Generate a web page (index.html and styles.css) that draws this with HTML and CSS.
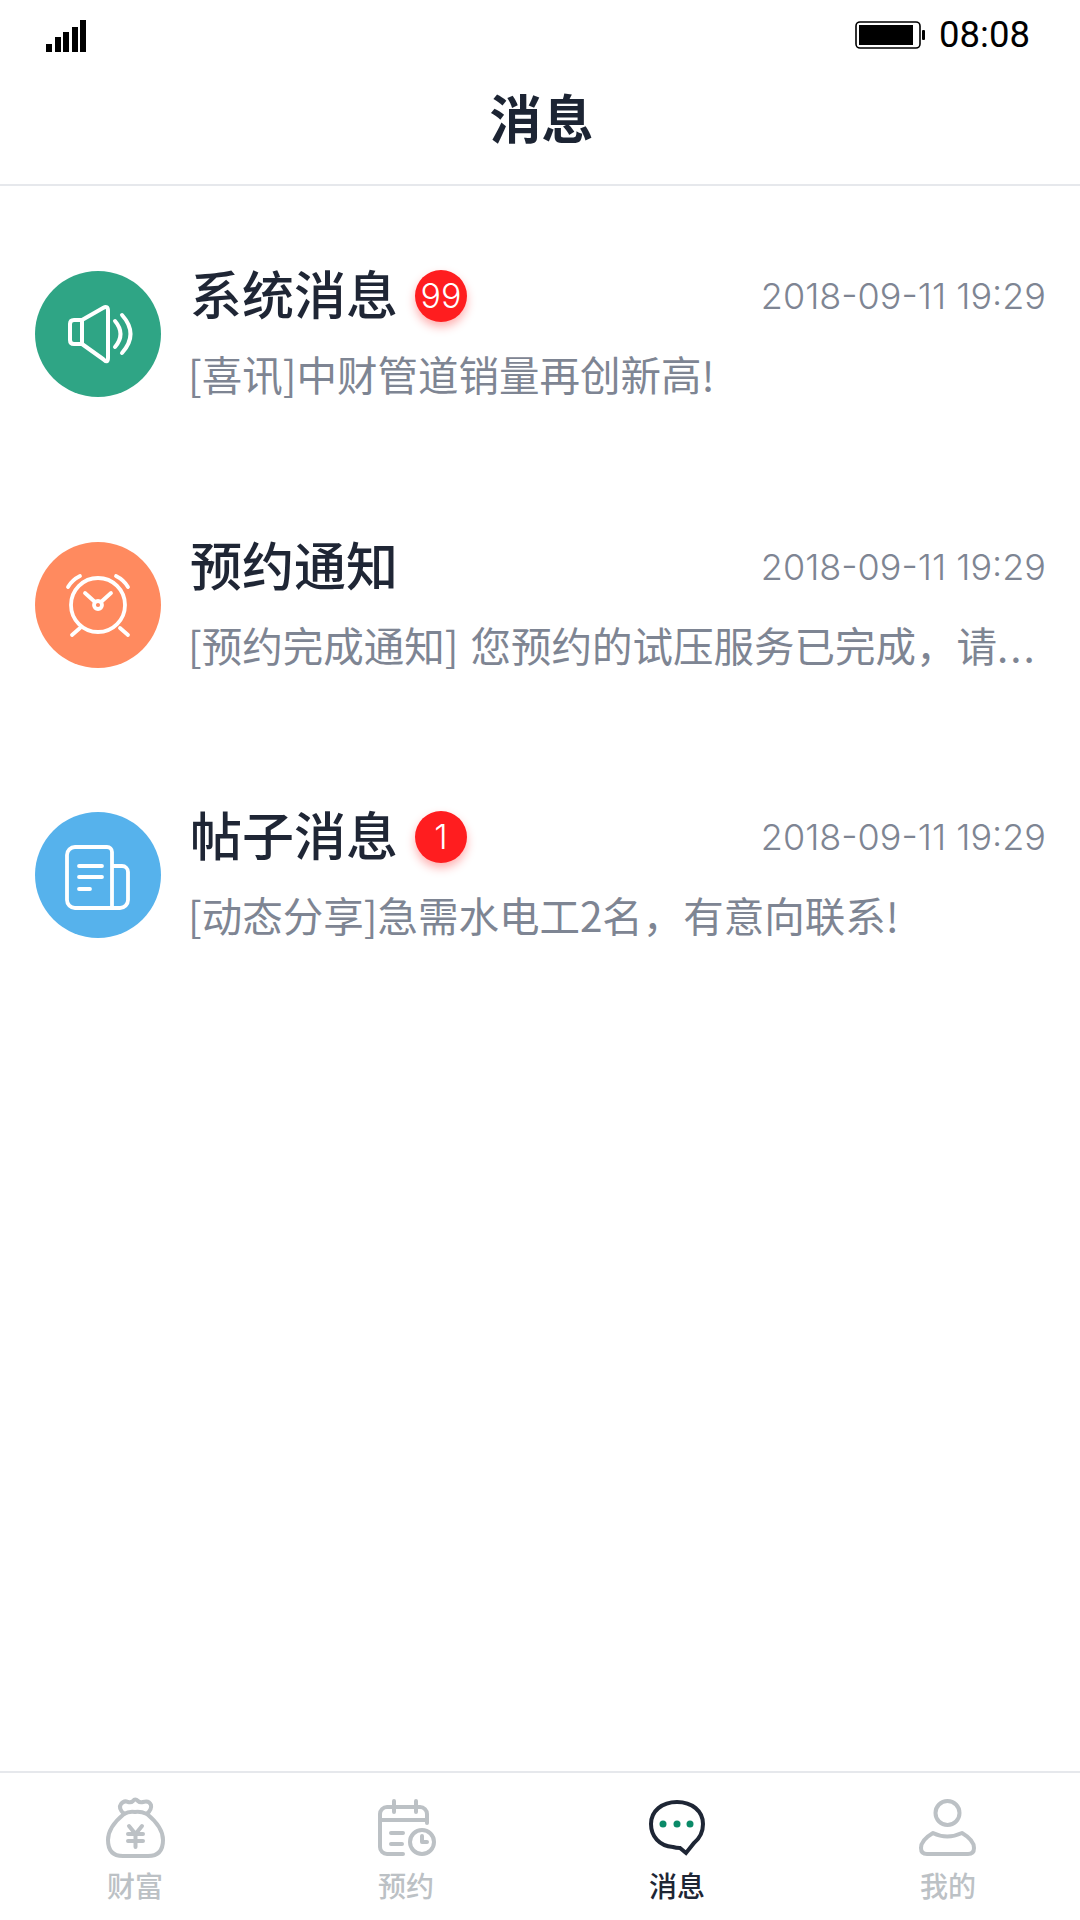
FILE: index.html
```html
<!DOCTYPE html>
<html lang="zh-CN">
<head>
<meta charset="utf-8">
<title>消息</title>
<link rel="stylesheet" href="styles.css">
</head>
<body>
<div class="phone">
  <div class="status">
    <svg class="signal" width="40" height="32" viewBox="0 0 40 32"><rect x="0" y="24" width="6" height="8"/><rect x="9" y="17" width="6" height="15"/><rect x="17" y="12" width="6" height="20"/><rect x="26" y="7" width="6" height="25"/><rect x="34" y="0" width="6" height="32"/></svg>
    <div class="status-right">
      <svg class="battery" width="71" height="28" viewBox="0 0 71 28"><rect x="1" y="1" width="64" height="26" rx="4" fill="none" stroke="#000" stroke-width="1.6"/><rect x="4" y="4" width="54" height="20" fill="#000"/><rect x="67" y="9" width="3" height="10" rx="1" fill="#000"/></svg>
      <span class="time">08:08</span>
    </div>
  </div>
  <header class="nav">消息</header>
  <main class="list">
    <section class="row">
      <div class="avatar green">
        <svg width="126" height="126" viewBox="0 0 126 126" fill="none" stroke="#fff" stroke-width="4" stroke-linecap="round" stroke-linejoin="round"><path d="M47 49 L68 37 Q73 34 73 40 V87 Q73 93 68 88 L47 73 H39 Q35 73 35 69 V53 Q35 49 39 49 Z M47 49 V73"/><path d="M80 50 Q91 63 80 76"/><path d="M87 44 Q104 63 87 82"/></svg>
      </div>
      <div class="body">
        <div class="top">
          <div class="name"><h2>系统消息</h2><span class="badge">99</span></div>
          <time class="date">2018-09-11 19:29</time>
        </div>
        <p class="desc">[喜讯]中财管道销量再创新高!</p>
      </div>
    </section>
    <section class="row">
      <div class="avatar orange">
        <svg width="126" height="126" viewBox="0 0 126 126" fill="none" stroke="#fff" stroke-width="3.800" stroke-linecap="round" stroke-linejoin="round"><circle cx="63" cy="63" r="27"/><circle cx="63" cy="63" r="4"/><path d="M50 51 L60 60 M76 51 L66 60"/><path d="M33 45 Q37 38 45 34 M81 34 Q89 38 93 45"/><path d="M37 93 L45 86 M93 93 L85 86"/></svg>
      </div>
      <div class="body">
        <div class="top">
          <div class="name"><h2>预约通知</h2></div>
          <time class="date">2018-09-11 19:29</time>
        </div>
        <p class="desc spaced">[预约完成通知] 您预约的试压服务已完成&#65292;请<span class="dots">...</span></p>
      </div>
    </section>
    <section class="row">
      <div class="avatar blue">
        <svg width="126" height="126" viewBox="0 0 126 126" fill="none" stroke="#fff" stroke-width="3.800" stroke-linecap="round" stroke-linejoin="round"><path d="M77 96 H40 a8 8 0 0 1 -8 -8 V43 a8 8 0 0 1 8 -8 H72 a5 5 0 0 1 5 5 V96 H85 a8 8 0 0 0 8 -8 V60 a6 6 0 0 0 -6 -6 H77"/><path d="M44 54 H67 M44 65 H67 M44 77 H55"/></svg>
      </div>
      <div class="body">
        <div class="top">
          <div class="name"><h2>帖子消息</h2><span class="badge">1</span></div>
          <time class="date">2018-09-11 19:29</time>
        </div>
        <p class="desc">[动态分享]急需水电工2名&#65292;有意向联系!</p>
      </div>
    </section>
  </main>
  <nav class="tabs">
    <div class="tab">
      <svg width="70" height="66" viewBox="0 0 70 66" fill="none" stroke="#bcc1c5" stroke-width="4" stroke-linecap="round" stroke-linejoin="round"><path d="M24 19 Q18 13 21 9 Q24 5 28 7 Q31 8 33 6 Q35 3 38 6 Q40 8 43 7 Q49 5 51 10 Q52 14 47 19 Q40 16 35 17 Q29 16 24 19 Z"/><path d="M24 19 Q8 32 8 45 Q8 61 23 61 H48 Q63 61 63 45 Q63 32 47 19"/><path d="M29 31 L35.500 39 L42 31 M35.500 39 V52 M28 39 H43 M28 46 H43"/></svg>
      <span>财富</span>
    </div>
    <div class="tab">
      <svg width="70" height="66" viewBox="0 0 70 66" fill="none" stroke="#bcc1c5" stroke-width="4" stroke-linecap="round" stroke-linejoin="round"><path d="M32 59 H16 a7 7 0 0 1 -7 -7 V19 a7 7 0 0 1 7 -7 H49 a7 7 0 0 1 7 7 V28"/><path d="M9 25 H56 M23 6 V17 M45 6 V17 M20 38 H32 M20 49 H31"/><circle cx="51" cy="47" r="12"/><path d="M51 41 V47 H56"/></svg>
      <span>预约</span>
    </div>
    <div class="tab active">
      <svg width="70" height="66" viewBox="0 0 70 66" fill="none" stroke="#1e2635" stroke-width="4" stroke-linejoin="miter"><path d="M38 53 Q34 53 31 52 C17 51 9 41 9 29 C9 16 20 7 35 7 C50 7 61 16 61 29 C61 37 58 43 52 48 L44 58 Z"/><circle cx="21" cy="29" r="3.500" fill="#0a8a68" stroke="none"/><circle cx="35" cy="29" r="3.500" fill="#0a8a68" stroke="none"/><circle cx="48" cy="29" r="3.500" fill="#0a8a68" stroke="none"/></svg>
      <span>消息</span>
    </div>
    <div class="tab">
      <svg width="70" height="66" viewBox="0 0 70 66" fill="none" stroke="#bcc1c5" stroke-width="4" stroke-linecap="round" stroke-linejoin="round"><circle cx="34.500" cy="18" r="12"/><path d="M20 38 Q34 45 49 38 Q61 45 61 53 Q61 59 55 59 H14 Q8 59 8 53 Q8 45 20 38 Z"/></svg>
      <span>我的</span>
    </div>
  </nav>
</div>
</body>
</html>
```
FILE: styles.css
```css
* { box-sizing: border-box; }
html, body { margin: 0; padding: 0; background: #fff; }
.phone {
  width: 1080px;
  height: 1920px;
  display: flex;
  flex-direction: column;
  overflow: hidden;
  font-family: "Noto Sans CJK SC", "Noto Sans", sans-serif;
}
.status {
  height: 66px;
  flex: none;
  display: flex;
  justify-content: space-between;
  align-items: center;
  padding: 4px 50px 0 46px;
}
.signal { fill: #000; margin-top: 2px; }
.status-right { display: flex; align-items: center; gap: 13px; }
.time { font: 400 36.500px/40px Roboto, "Liberation Sans", sans-serif; color: #000; }
.nav {
  height: 120px;
  flex: none;
  border-bottom: 2px solid #e6e8ec;
  text-align: center;
  font-size: 52px;
  line-height: 102px;
  font-weight: 700;
  padding-left: 3px;
  color: #1c2433;
}
.list {
  flex: 1;
  padding: 85px 34px 0 35px;
  display: flex;
  flex-direction: column;
  gap: 138.500px;
}
.row { display: flex; align-items: flex-start; gap: 27px; height: 132px; }
.avatar { width: 126px; height: 126px; border-radius: 50%; flex: none; }
.avatar svg { display: block; }
.green { background: #2fa585; }
.orange { background: #ff8a5f; }
.blue { background: #56b2ec; }
.body { flex: 1; min-width: 0; }
.top { height: 50px; display: flex; justify-content: space-between; align-items: center; }
.name { display: flex; align-items: center; gap: 17px; padding-left: 2px; }
h2 { margin: -6px 0 0; font-size: 52px; line-height: 50px; font-weight: 500; color: #1f2635; }
.badge {
  width: 52px;
  height: 52px;
  border-radius: 50%;
  background: #ff1d1f;
  box-shadow: 0 5px 10px rgba(255, 30, 30, .35);
  color: #fff;
  font: 300 34px/52px Inter, Roboto, "Liberation Sans", sans-serif;
  text-align: center;
}
.date { font: 300 36px/50px Inter, Roboto, "Liberation Sans", sans-serif; color: #7e8593; }
.desc {
  margin: 28px 0 0;
  font-size: 40.500px;
  line-height: 50px;
  font-weight: 400;
  color: #7e8593;
  white-space: nowrap;
}
.spaced { word-spacing: 3px; }
.dots { letter-spacing: 2px; }
.tabs {
  height: 149px;
  flex: none;
  border-top: 2px solid #e6e8ec;
  display: flex;
  justify-content: space-between;
  padding: 22px 97px 0 100px;
}
.tab {
  width: 70px;
  display: flex;
  flex-direction: column;
  align-items: center;
  font-size: 28px;
  line-height: 34px;
  font-weight: 500;
  color: #bcc1c5;
}
.tab svg { display: block; flex: none; margin-bottom: 7px; }
.tab.active { color: #1e2635; }
```
